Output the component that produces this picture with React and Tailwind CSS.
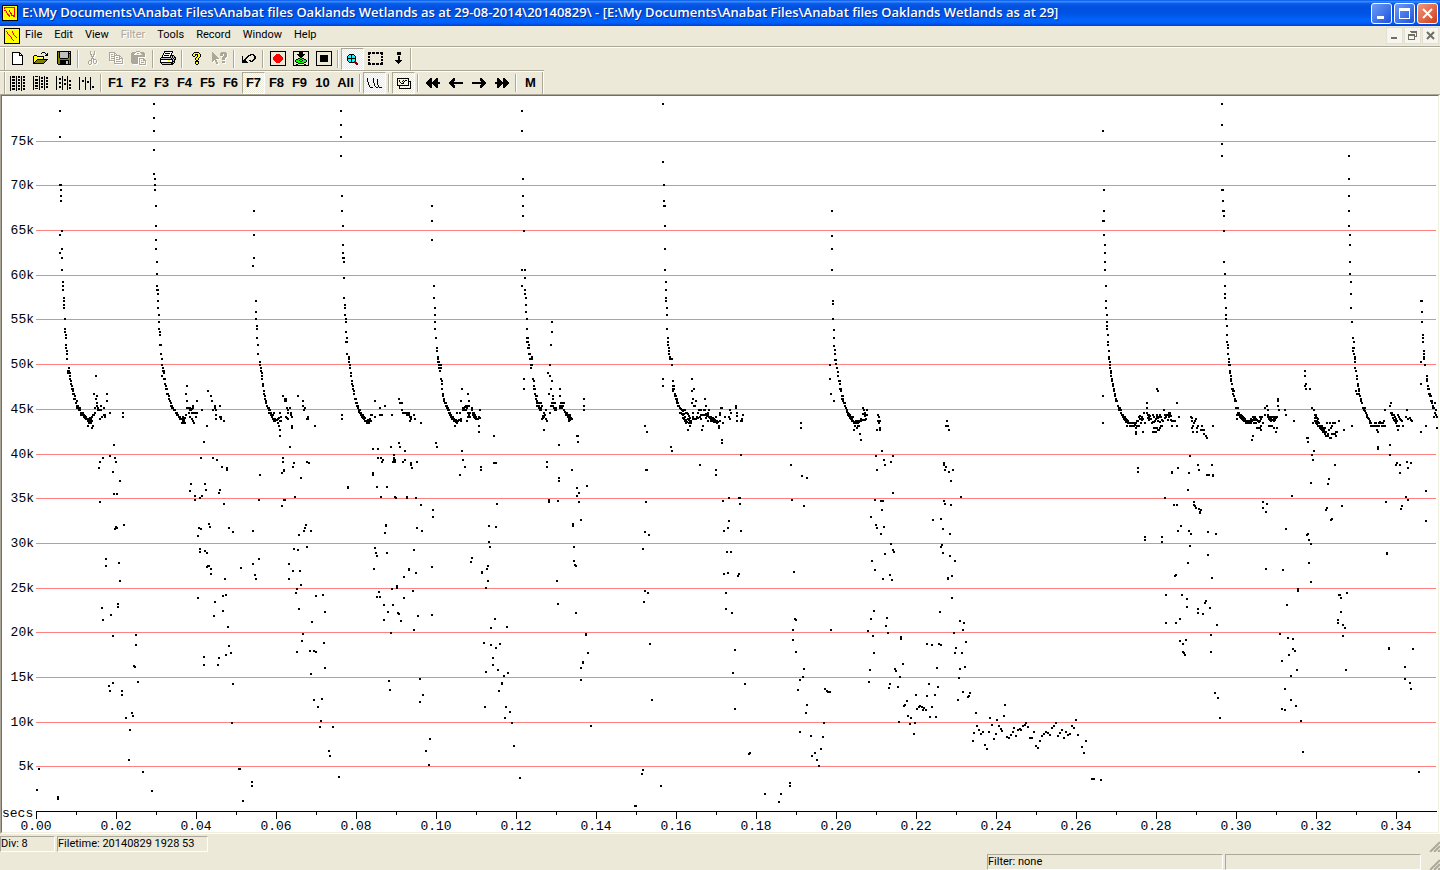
import { useState } from 'react';

const MENUS = ['File', 'Edit', 'View', 'Filter', 'Tools', 'Record', 'Window', 'Help'];

const TITLE =
  'E:\\My Documents\\Anabat Files\\Anabat files Oaklands Wetlands as at 29-08-2014\\20140829\\ - [E:\\My Documents\\Anabat Files\\Anabat files Oaklands Wetlands as at 29]';

// One letter per pixel in the toolbar bitmaps
const INKS = {
  K: '#000000',
  W: '#ffffff',
  G: '#c0c0c0',
  Y: '#ffff00',
  O: '#808000',
  R: '#ff0000',
  M: '#800000',
  C: '#00ffff',
  L: '#00ff00',
};

const BITMAPS = {
  new: [
    'KKKKKKKK...',
    'KWWWWWWKK..',
    'KWWWWWWKWK.',
    'KWWWWWWKKKK',
    'KWWWWWWWWWK',
    'KWWWWWWWWWK',
    'KWWWWWWWWWK',
    'KWWWWWWWWWK',
    'KWWWWWWWWWK',
    'KWWWWWWWWWK',
    'KWWWWWWWWWK',
    'KWWWWWWWWWK',
    'KKKKKKKKKKK',
  ],
  open: [
    '.........KKK....',
    '........K...K.K.',
    '.............KK.',
    '.KKK........KKK.',
    'KYWYKKKKKKK.....',
    'KWYWYWYWYWK.....',
    'KYWYWYWYWYK.....',
    'KWYWKKKKKKKKKKK.',
    'KYWKOOOOOOOOOK..',
    'KWKOOOOOOOOOK...',
    'KKOOOOOOOOOK....',
    'KKKKKKKKKKK.....',
  ],
  save: [
    'KKKKKKKKKKKKKK',
    'KOKGGGGGGGGKGK',
    'KOKGGGGGGGGKKK',
    'KOKGGGGGGGGKOK',
    'KOKGGGGGGGGKOK',
    'KOKGGGGGGGGKOK',
    'KOKGGGGGGGGKOK',
    'KOOKKKKKKKKOOK',
    'KOOOOOOOOOOOOK',
    'KOOKKKKKKKKKOK',
    'KOOKKKKKKGGKOK',
    'KOOKKKKKKGGKOK',
    'KOOKKKKKKGGKOK',
    '.KKKKKKKKKKKKK',
  ],
  cut: [
    '..K...K..',
    '..K...K..',
    '..K...K..',
    '..KK.KK..',
    '...K.K...',
    '...KKK...',
    '....K....',
    '...KKK...',
    '...K.KKK.',
    '.KKK.K..K',
    'K..K.K..K',
    'K..K.K..K',
    'K..K..KK.',
    '.KK......',
  ],
  copy: [
    'KKKKKK........',
    'K....KK.......',
    'K.KK.K.K......',
    'K....KKKKKK...',
    'K.KKKK....KK..',
    'K....K.KK.K.K.',
    'K.KKKK....KKKK',
    'K....K.KKKK..K',
    'KKKKKK.......K',
    '.....K.KKKKK.K',
    '.....K.......K',
    '.....KKKKKKKKK',
  ],
  paste: [
    '.....KKKK......',
    '.KKKK....KKKK..',
    'KKKK..KK..KKKK.',
    'KKK........KKK.',
    'KKKKKKKKKKKKKK.',
    'KKKKKKKKKKKKKK.',
    'KKKKKKK........',
    'KKKKKKK.KKKKK..',
    'KKKKKKK.K...KK.',
    'KKKKKKK.K.K.KKK',
    'KKKKKKK.K.....K',
    'KKKKKKK.K.KKK.K',
    '.KKKKKK.K.....K',
    '........KKKKKKK',
  ],
  print: [
    '....KKKKKKKKK...',
    '....KWWWWWWWK...',
    '...KWKKKKKWK....',
    '...KWWWWWWWK....',
    '..KWKKKKKWKKKK..',
    '..KWWWWWWWKGKGK.',
    '.KKKKKKKKKKGKGKK',
    'KGGGGGGGGGGKGKGK',
    'KKKKKKKKKKKKKGKK',
    'KWWWWWWWYYWWKGK.',
    'KWWWWWWWWWWWKKK.',
    'KKKKKKKKKKKKKGK.',
    '.KGGGGGGGGGKKK..',
    '..KKKKKKKKKKK...',
  ],
  help: [
    '..KKKKK..',
    '.KYYYYYK.',
    'KYYKKKYYK',
    'KYYK.KYYK',
    '.KK..KYYK',
    '....KYYK.',
    '...KYYK..',
    '...KYYK..',
    '....KK...',
    '...KKKK..',
    '...KYYK..',
    '...KYYK..',
    '....KK...',
  ],
  context: [
    'K........KKKKK..',
    'KK......KKKKKKK.',
    'KKK.....KKK.KKK.',
    'KKKK....KKK.KKK.',
    'KKKKK......KKKK.',
    'KKKKKK....KKKK..',
    'KKKKKKK...KKK...',
    'KKKK......KKK...',
    'KK.KK...........',
    'K..KK.....KKK...',
    '....KK....KKK...',
    '....KK..........',
  ],
  undo: [
    '........KKKK..',
    '......KKK..KK.',
    'K....KK.....KK',
    'K...KK......KK',
    'K..KK.......KK',
    'K.KK.......KK.',
    'KKKK...KK.KK..',
    'KKKKK...KKK...',
    'KKKKKK........',
  ],
  record: [
    'KKKKKKKKKKKKKKKK',
    'K..............K',
    'K..............K',
    'K.....RRRR.....K',
    'K....RRRRRR....K',
    'K...RRRRRRRR...K',
    'K..RRRRRRRRRR..K',
    'K..RRRRRRRRRR..K',
    'K..RRRRRRRRRR..K',
    'K...RRRRRRRR...K',
    'K....RRRRRR....K',
    'K.....RRRR.....K',
    'K..............K',
    'K..............K',
    'KKKKKKKKKKKKKKKK',
  ],
  monitor: [
    'KKKKKKKKKKKKKKKK',
    'K.....KKKK.....K',
    'K.....KKKK.....K',
    'K...KKKKKKKK...K',
    'K....KKKKKK....K',
    'K.....KKKK.....K',
    'K......KK......K',
    'K....KKLLKK....K',
    'K..KKLLKKLLKK..K',
    'K.KLLLKLLKLLLK.K',
    'K.KLLLLKKLLLLK.K',
    'K..KKLLLLLLKK..K',
    'K....KKKKKK....K',
    'K..KK......KK..K',
    'KKKKKKKKKKKKKKKK',
  ],
  stop: [
    'KKKKKKKKKKKKKKKK',
    'K..............K',
    'K..............K',
    'K..............K',
    'K...KKKKKKKK...K',
    'K...KKKKKKKK...K',
    'K...KKKKKKKK...K',
    'K...KKKKKKKK...K',
    'K...KKKKKKKK...K',
    'K...KKKKKKKK...K',
    'K...KKKKKKKK...K',
    'K..............K',
    'K..............K',
    'K..............K',
    'KKKKKKKKKKKKKKKK',
  ],
  zoom: [
    '..KKKKK....',
    '.KCCKCCK...',
    'KCCCKCCCK..',
    'KCCCKCCCK..',
    'KKKKKKKKK..',
    'KCCCKCCCK..',
    'KCCCKCCCK..',
    '.KCCKCCMM..',
    '..KKKKKMMM.',
    '........MMM',
    '.........MM',
  ],
  select: [
    'KKK.KKK.KKK.KKK',
    'KKK.KKK.KKK.KKK',
    'KK...........KK',
    '...............',
    'KK...........KK',
    'KK...........KK',
    '...............',
    'KK...........KK',
    'KK...........KK',
    '...............',
    'KK...........KK',
    'KKK.KKK.KKK.KKK',
    'KKK.KKK.KKK.KKK',
  ],
  drop: [
    '..KKKK.',
    '..KKKK.',
    '..KKKK.',
    '.......',
    '...KK..',
    '...KK..',
    '...KK..',
    '...KK..',
    'KKKKKKK',
    '.KKKKK.',
    '..KKK..',
    '...K...',
  ],
  bars1: [
    'K.KKK.K.KK.K.KK.',
    'K.KKK.K.KK.K.KK.',
    'K.....K....K....',
    'K.KKK.K.KK.K.KK.',
    'K.KKK.K.KK.K.KK.',
    'K.....K....K....',
    'K.KKK.K.KK.K.KK.',
    'K.KKK.K.KK.K.KK.',
    'K.....K....K....',
    'K.KKK.K.KK.K.KK.',
    'K.KKK.K.KK.K.KK.',
    'K.....K....K....',
    'K.KKK.K.KK.K.KK.',
    'K.KKK.K.KK.K.KK.',
    'K.....K....K....',
  ],
  bars2: [
    'K.KKK.K....K....',
    'K.....K.KK.K.KK.',
    'K.....K.KK.K.KK.',
    'K.KKK.K....K....',
    'K.KKK.K.KK.K.KK.',
    'K.....K.KK.K.KK.',
    'K.KKK.K....K....',
    'K.KKK.K.KK.K.KK.',
    'K.....K.KK.K.KK.',
    'K.KKK.K....K....',
    'K.KKK.K.KK.K.KK.',
    'K.....K.KK.K.KK.',
    'K.KKK.K....K....',
    'K.....K....K....',
  ],
  bars3: [
    'K.....K....K....',
    'K.....K....K....',
    'K..KK.K....K....',
    'K..KK.K.KK.K....',
    'K.....K.KK.K.KK.',
    'K.....K....K.KK.',
    'K..KK.K....K....',
    'K..KK.K.KK.K....',
    'K.....K.KK.K.KK.',
    'K.....K....K.KK.',
    'K..KK.K....K....',
    'K..KK.K....K.KK.',
    'K.....K....K.KK.',
    'K.....K....K....',
  ],
  bars4: [
    'K.....K....K....',
    'K.....K....K....',
    'K.....K....K....',
    'K..KK.K....K....',
    'K..KK.K.KK.K....',
    'K.....K.KK.K....',
    'K.....K....K....',
    'K.....K....K....',
    'K.....K....K....',
    'K.....K....K.KK.',
    'K.....K....K.KK.',
    'K.....K....K....',
    'K.....K....K....',
  ],
  calls: [
    'K.....K........',
    'K.....K...K....',
    'K.....K...K....',
    'K.....K...K....',
    '.K....K...K....',
    '.K.....K..K....',
    '.K.....K..K....',
    '..K....K...K...',
    '..K.....K..K...',
    '...KKK...KK.KKK',
  ],
  windows: [
    'KKKKKKKKKKKK..',
    'K..........K..',
    'K.K...K.KK.K..',
    'K.K..K.K...KKK',
    'K..K..K....K.K',
    'K...KKK....K.K',
    'K..........K.K',
    'KKKKKKKKKKKK.K',
    '..K..........K',
    '..K..........K',
    '..KKKKKKKKKKKK',
  ],
  first: [
    '....KK....KK..',
    '...KKK...KKK..',
    '..KKKK..KKKK..',
    '.KKKKK.KKKKK..',
    'KKKKKKKKKKKKKK',
    'KKKKKKKKKKKKKK',
    '.KKKKK.KKKKK..',
    '..KKKK..KKKK..',
    '...KKK...KKK..',
    '....KK....KK..',
  ],
  prev: [
    '....KK........',
    '...KKK........',
    '..KKKK........',
    '.KKKK.........',
    'KKKKKKKKKKKKKK',
    'KKKKKKKKKKKKKK',
    '.KKKK.........',
    '..KKKK........',
    '...KKK........',
    '....KK........',
  ],
  logo: [
    'KKKKKKKKKKKKKKKK',
    'KYYYYYYYYYYYYYYK',
    'KYRRRRRRRRRRRYYK',
    'KYRYYYYYYYYYRYYK',
    'KYYYYYYYYYYYRYYK',
    'KYRRYYYRYYYYRYYK',
    'KYYYRYYRYYYYRYYK',
    'KYYYRYYYRYYYRYYK',
    'KYYYYRYYRRYYRYYK',
    'KYYYYRRYYRYYRYYK',
    'KYYYYYRRYRRRRYYK',
    'KYYYYYYRYYYRRYYK',
    'KYYYYYYYYYYYYYYK',
    'KYYYYYYYYYYYYYYK',
    'KYYYYYYYYYYYYYYK',
    'KKKKKKKKKKKKKKKK',
  ],
  child: [
    'KKKKKKKKKKKKKKKK',
    'KYYYYYYYYYYYYYYK',
    'KYYYYYYYYYYYYYYK',
    'KYRYYYYYRYYYYYYK',
    'KYYRYYYYRYYYYYYK',
    'KYYRYYYYYRYYYYYK',
    'KYYYRYYYYRYYYYYK',
    'KYYYYRYYYYRYYYYK',
    'KYYYYYRYYYYRYYYK',
    'KYYYYYYRYYYYRYYK',
    'KYYYYYYRYYYYYYYK',
    'KYYYYYYYRYYYYYYK',
    'KYYYYYYYYRYYYYYK',
    'KYYYYYYYYYYYYYYK',
    'KYYYYYYYYYYYYYYK',
    'KKKKKKKKKKKKKKKK',
  ],
};

const mirror = (rows) => rows.map((r) => r.split('').reverse().join(''));
BITMAPS.next = mirror(BITMAPS.prev);
BITMAPS.last = mirror(BITMAPS.first);

const FILE_BAR = [
  ['new', 'New'], ['open', 'Open'], ['save', 'Save'], null,
  ['cut', 'Cut', 'off'], ['copy', 'Copy', 'off'], ['paste', 'Paste', 'off'], null,
  ['print', 'Print'], null,
  ['help', 'Help'], ['context', 'Context help', 'off'], null,
  ['undo', 'Undo'], null,
  ['record', 'Record'], ['monitor', 'Monitor'], ['stop', 'Stop'], null,
  ['zoom', 'Zoom', 'down'], ['select', 'Select'], ['drop', 'Drop marker'],
];

const SCALES = ['F1', 'F2', 'F3', 'F4', 'F5', 'F6', 'F7', 'F8', 'F9', '10', 'All'];

// Frequency lines, top to bottom
const FREQS = [
  [75, 141], [70, 185], [65, 230], [60, 275], [55, 319], [50, 364], [45, 409], [40, 454],
  [35, 498], [30, 543], [25, 588], [20, 632], [15, 677], [10, 722], [5, 766],
];

// Zero-crossing dots. Each block has its own origin, three units to a pixel,
// and lists its columns as x:y,y,y
const BLOCKS = [
  {
    x: 0,
    y: 96,
    dots: `180:45,123,267,417,471 183:267,282,300,315 186:405,459,486,522 189:558,570,582 192:606,615,627,636
      195:669,699,708 198:717,726,747,756 201:765,774,789 204:825,831 207:816,825,831 210:831,840,849 213:855,864
      216:870,879 219:879,885,894 222:894,909 225:900,909 228:921 231:915,930,936 234:930,936 237:936,942 240:936,942
      243:951,957 246:951,957 249:951,957 252:957,963 255:960,966 258:963,969 261:969 264:969,975,990 267:969,975,981
      270:966,975,981 273:969,975,981 276:963,975,996 279:957,990 282:894,957 285:936,951 288:840,909 291:900,921,930
      294:936,942 297:942 300:942,969,1098 303:930,942 306:963 312:936,957 315:957,963 321:894,915 330:951,1080
      369:951,963 342:1047 309:1086 345:1086 348:1098 297:1116 339:1128
      462:24,66,105,162,234 465:249,267,282 468:330,390,432,459 471:498,534,570,582 474:582,594,615,636
      477:657,678,699 480:708,717,747 483:747,774 486:789,807,840 489:816,825 492:825,831,849 495:849,864 498:870,879
      501:879,894 504:894 507:900,909 510:915 513:921,930 516:930,936 519:936 522:942 525:942 528:951 531:951,957
      534:957 537:963 540:963,969 543:969 546:969,981 549:963,969,975,981 552:969,975 555:966,981 558:894,957
      561:870,915,936 564:936 567:936,951 570:936,942,963 573:942 576:939,951,969 579:930,936,951,975 582:981
      585:951 588:951,963 591:915,951 606:942 624:885 633:900 636:915 639:942,1086 645:930,936 648:942,957,969
      660:930,963 663:963,969 672:975 621:990 612:1038 603:1086 651:1092 666:1113 681:1116,1122
      762:345,417,486 759:510 768:615,648,669 771:690,699,726 774:747,774 780:798,807,1137 783:816,825
      786:831,840,849 789:864,870 792:885,894 795:900,909 798:915,921 801:930 804:936 807:936,942,951 810:942,951
      813:951,957 816:957,963 819:957,969 822:951,969,975 825:969,975 828:972 831:972 834:969,981 837:966,990
      840:951,975,1002,1020 843:963,975 849:900,1086,1098 855:909,915 858:909,915,963 861:936,966 864:942,951,969
      870:936,1053 873:951,957 876:963,990,996 894:900 909:915,930 912:942 915:936 921:969,1098 924:963,969 945:990
      882:1101 879:1113 852:1122 846:1131 927:1101
      1023:45,87,123,180 1026:300,345,957,969 1029:390,447,471,486 1032:486,498,546,606 1035:627,636,657
      1038:669,678,708,738 1041:726,738,774 1047:783,789,798 1050:807,816 1053:831,840 1056:855,864 1059:870,879
      1062:885,894 1065:909 1068:909,921 1071:921,930 1074:930,936 1077:942,948`,
  },
  {
    x: 360,
    y: 96,
    dots: `0:942,951 3:951,957 6:957,963 9:957,966 12:963,969 15:966,975 18:975 21:975,981 24:972,981 27:975,981
      30:969 33:957,975 36:957 45:915,963 60:936,957 66:957,1098 75:930 96:957 117:909,1041 120:921,1053 126:921,942
      129:951,1098 135:951,1065,1092 141:951,957 147:951,957 150:963,975 153:963,969,1101,1107 162:957 165:969 183:981
      93:1053 39:1059,1131,1137 54:1059,1086 63:1086 69:1092 102:1077,1086,1092,1098 99:1098 105:1092,1098 156:1116
      171:1098 228:1041 231:1053
      216:330,375,432 222:570,606 225:636,657,678,699 228:726 231:756,765 234:783,789,798 237:798,807,816
      240:807,816,825 243:807,816,849 246:855,864,879 249:894,900 252:909,915 255:921 258:921,930 261:930,936
      264:936,942 267:942,951 270:951,957 273:957,963 276:963,969 279:963,969 282:969,975 285:975,990 288:972,978
      291:951,975,981 294:975 297:972 300:951,972,1137 303:915,969,975 306:879,1065 309:936,942,1092 312:936,942
      315:933,942,1113 318:930,942 321:930,936,975 324:894,930,951,963 327:915,930,957 330:951,963 336:936,942
      339:951,957 342:951,963 345:957,966 348:963,969 351:969 354:969 357:963,990,1008 360:942,966 402:1020,1101
      363:1113,1122 408:1101
      486:45,105,522,570 489:249,300,330,360 492:405,849,879 495:522,546,582,594 498:606,627,648 501:669,699,726,738
      504:726,738,756 507:747,756,774 510:774,789 513:789,807,816 516:783,789,807 519:849 522:855,870,879 525:879,894
      528:900,909 531:900,915,921,930 534:921,930 537:921,930,936 540:936,942 543:921,936,942 546:930,969 549:960,966
      552:951,963,1002 555:957 558:942,969 561:975,1098,1113 576:678,708,855,921 573:747,879,930 570:807,840,951
      564:831 567:894 579:900,909,930 582:921,936 585:921,936,942 588:936,942 600:879,900,930,936 603:921,936
      606:921,930,936 609:921,930 612:921,942 615:948 618:951,957 621:951,957 624:957,963 627:957,969,975
      630:957,963,972 633:966 636:969,1122 672:909,930,942 651:1020 654:1020,1038 597:1047
      909:24,198,849 912:267,315,330 915:330,390,459,522 918:558,582,606,615 921:636,657,699 924:726,738,747
      927:756,765,774 930:783,789 933:789 936:789,807 996:849`,
  },
  {
    x: 720,
    y: 96,
    dots: `336:345,420,459,522 339:615,624,669 342:702,726,750 345:762,774,792 348:792,804 351:816 354:828,840
      330:807,849`,
  },
  {
    x: 640,
    y: 380,
    dots: `69:18 99:3,18,27,33 102:18,27 105:42,48 108:48,57 111:57,63,69 114:69,78 117:78 120:84,99 123:87,99
      126:90,102 129:93,105,114 132:90,102,117 135:90,111,123 138:99,120,129 141:99,126 144:102,117,150 147:108,120,129
      150:114,126,138 153:123,129 156:33,69 162:27,78,117 159:57,99,111,117 165:78 168:63,117 171:111 174:99,114
      177:90 180:90,111,255 183:90,105,117 186:105,150 189:105,138 192:90,105 195:57,90,105 198:78,102,114 201:102,108
      204:99,105,123 207:90,111 210:114 213:111,117,123 216:117,123 219:114,123 222:117,126 225:120,126 228:111,126,270,285
      231:123,129 234:126 237:138,144 240:99,105,123 243:84 246:84,180,189 249:129,363 255:111 267:111,354,423
      270:90,117 273:99,516 288:78,84 291:99,108,123 303:123,225,453 306:117,123 309:105
      93:201 96:213 18:270,366 21:156,270 15:138,456,633 297:354,582 300:354,372 264:444,579 252:453,582 261:516
      294:588 258:639,687 276:699 285:810,987 279:879 315:912 327:1122 330:1119 27:465 9:507,1170 24:639 12:666
      30:792 36:960 6:1182
      483:129,144 453:255 486:288 501:294,975 456:360 492:378,867 462:576 465:717 468:720,816 459:750,780 573:42,750
      489:891 480:900,1056 474:930 498:999 552:1029 513:1068 549:1071 543:1107 525:1119 516:1128 531:1140 537:1158
      555:927 561:933 564:936 570:936
      582:63 597:3 600:3,12,27 603:27,33 606:48,57 609:48,57,63 612:69 615:69,78 618:84 621:90,96 624:99,105
      627:102,108 630:105,114 633:111,117 636:117,123 639:111,123 642:126,129,150 645:126,138 648:123,129
      651:126,129,144 654:123,129,138 657:126,138 660:123,162 663:117,123,180 666:120 669:84,102,120 672:90,102
      675:99,108,120 678:105,117 681:90,105
      714:105,123 717:111,123,129 720:123,144,150 711:150,270,444 726:213,363,390 708:228,435 759:228,339,510
      732:240,441 753:246,492 735:255,522 705:360,570 723:363,462 729:363,597 693:411,717 762:516 696:543 750:585,912
      756:600 702:693,819 741:714 738:738 684:753 744:759 699:768 783:771,777 789:852 690:870 765:867 768:873
      780:891 687:906 747:924 774:921 828:945 861:792,948 885:945 867:912 894:921 891:864 876:795,981 897:792
      903:795 801:963 795:975 792:978 831:987 837:981 840:978 846:981 849:990 852:984 858:990 870:1011 888:1011
      804:1008 813:1014 777:1026 810:1032 825:1029 822:1062
      921:123,138 918:138,261 924:138,594,597 927:150,276 912:249,255,363 915:270,372 939:270 933:303,375 963:351
      903:417,501 879:420 909:447,519 930:462,528 906:495 945:543,819 936:588,654 900:696 960:723,867 972:729
      969:750,936 942:759 978:786 948:804 966:819 975:861 957:894 990:939 987:948 984:951 954:960 1008:999 1095:975
      1092:1008 1050:1014 1071:1020 1011:1038 1056:1035 1077:1038 1083:1047 1086:1053 1017:1050 1029:1056 1023:1062
      1002:1059 1047:1056 1068:1062 1062:1077 999:1083 1035:1095 1041:1107 1101:1071 1107:1074 1113:1065 1119:1056
      1122:1044 1128:1068 1134:1050 1140:1047 1143:1050 1149:1038 1155:1035 1158:1029 1164:1041 1170:1074 1176:1074
      1182:1056 1188:1098 1194:1104 1200:1083 1206:1068 1212:1062 1218:1056 1224:1059 1230:1065 1236:1044 1242:1038
      1248:1029 1254:1068 1260:1059 1266:1050 1272:1074 1278:1056 1284:1065 1290:1062 1296:1038 1302:1044 1308:1020
      1314:1065`,
  },
  {
    x: 720,
    y: 770,
    dots: '135:72 177:96 183:72 210:39,48',
  },
  {
    x: 360,
    y: 470,
    dots: `597:24,33 681:48 651:54,78 657:69,96 51:51,258,381 81:51,249 63:81 105:81 108:84 141:81,84 168:84,309
      183:105 411:102 567:90,96 594:93,402 219:120,141 78:165,168 75:189 387:168,216 408:171,534 171:174 186:183
      639:162,168 663:150,594,630 390:231 642:231,273 45:234 48:249 162:240,480 336:264 333:276 645:285 648:288,429
      384:288,333 381:297 42:297 147:297,300 216:291,435 366:306,309 132:321,384 591:333 111:348,354 96:357
      378:354,606 57:366 60:381 159:363 72:405,450 99:405 84:426 114:429 117:432 123:453 174:438 405:447 393:474,525
      441:471 93:489 678:492,495 372:519 420:522 684:549 399:564,585 669:576,579 414:600 444:609 432:618 180:627,696
      87:633 426:639,642 90:660 417:663 189:675 375:711 438:711 450:726 435:744 456:759 693:768 210:807 462:828
      198:843 207:885 480:924 846:912 849:900 825:1008 828:1008 903:948`,
  },
  {
    x: 0,
    y: 470,
    dots: `339:6,498,639 360:33,333 342:72 351:72,174 300:96 372:165 348:171 345:177 318:267,288 357:279 354:402,411
      306:414 333:435 309:450 408:495,525 402:588 405:591 414:636 327:648 330:663 366:663,675 396:729 399:738 378:744
      390:780 387:870 429:906 456:963 117:897 111:960 174:981,987
      573:42 615:42,243 570:63 618:60 660:60 657:69,564 585:78,90 606:78 600:84,237,246 672:102 627:162,288 630:171
      597:174 603:177 594:198,384 687:174,528 699:186,642 621:249,291 633:297,312 675:327 723:294 669:378,423
      678:375,555 645:396 642:438 684:471 693:549 612:561,585 654:585 696:759 717:897 720:897 756:936,948 729:993
      624:288
      780:15 846:9,108 852:3,90 903:24,345 885:81 777:90,267 855:90 759:183,282 918:165 915:174 912:183 933:183,612
      897:195,417 921:231 882:237 894:240 867:282,327 765:315 768:327 879:303 900:303 891:357,546 888:369
      948:378,546 969:375 975:426,594 936:456 909:492 906:513 972:519 930:543 942:543,690 966:687 954:711 963:753
      960:771 999:771 987:843 990:858 1017:921 1044:51,54`,
  },
  {
    x: 1080,
    y: 96,
    dots: `69:105,375,900,981 72:282,345,375,417 75:447,471,498,522 78:570,615,636 81:657,678,690,699 84:717,738,747
      87:765,783,789 90:798,807,816 93:825,831,840 96:849,855 99:864,870 102:879,885 105:894,900 108:909,915 111:915
      114:930 117:936,942 120:936,942 123:942,951 126:957 129:957,963 132:963,969 135:963,972 138:969,978
      141:972,990 144:975,981 147:981 150:981,990 153:990 156:981 159:990 162:981,990 165:987 168:981,996,1008,1014
      171:975,990 174:975,1116,1128 177:963,990 180:960,969 183:969,981 186:963,972 189:969,1008 192:951 195:981
      201:921,936,951 204:957,966 207:957,963,972 210:960,969 213:969 216:981 219:957,978,1008 222:963,978,996
      225:975,1008 228:969,996,1008 231:879,957,963,996 234:885,966,975,1002 237:963,1002 240:957,978,996
      243:963,990 246:972,990 249:975 252:942 255:957,966 258:957,963 261:957 264:957,972 267:951,963 270:951,957
      273:960,972 276:975,990,1128,1131 279:975 285:975 291:921,990 297:963 333:963 336:966,975,996 339:990,1008
      342:981 345:975 348:969 354:990,1107 351:996,1008 363:1002 366:990 369:1002 372:1002,1014 378:1020 381:1026,1137
      399:990,1137 330:1080 396:1107 294:1116 327:1131 357:1122 387:1137
      426:24,87,144,180,282 429:282,315,345 432:345,360,405,498 435:534,570,594,606 438:636,657,669 441:690,717,738
      444:747,756,774 447:789,798,807 450:807,825,831 453:840,849,855 456:864,879 459:879,885,894 462:885,900
      465:909,915 468:915,936 471:936,957,969 474:936,951 477:951,957 480:957,963 483:957,966 486:960,969
      489:963,972 492:966,975 495:969,975 498:975,981 501:975,981 504:975 507:975,981 510:975 513:969,981
      516:975,1032 519:963,972,1020 522:963,969,981 525:963,972 528:969,981 531:972,996 534:975,996 537:978,996
      540:963,975,996 543:963,969,990,1002 546:963 549:981 555:936,957 561:930 564:942,957,963 567:969,990
      570:963,972,990 573:966,975 576:963,972,990 579:963,972 582:969,975,996 585:963,972 588:966,1008 591:963,996
      594:909,915,930 597:942 615:942 618:957 642:975
      675:825,840,870 678:864,879 690:879 696:936,1077 702:942,1065 699:981,1092 705:957,966,975 708:957,963,981
      711:966,975,984 714:969,978,990 717:981,990 720:990,996 723:993,999 726:990,1002 729:996,1008 732:1002,1008
      735:996,1014 738:1008,1020 741:981,1020 744:1014,1020 747:1002 750:981,1026 753:996,1026 756:990,1014 759:981
      762:1014 765:981,1014,1107 768:1008,1020 771:1008 777:975 792:1002 684:1026,1038 681:1026
      807:180,249,300,345,390 810:417,447,498,534 813:558,594,636 816:678,990 819:726,756,765 822:738,756,774
      825:783,789,798,816 828:825,885 831:840,849,894 834:864,870,894 837:879,885,894 840:900 843:909,915 846:921
      849:936 852:936,942 855:936,945 858:951 861:957,963 864:966 867:969 870:975,981 873:981,990 876:990 879:990
      882:990 885:981,990 888:981,990 891:990,1002 894:990,1008,1053,1059 897:981,990 900:978 903:981 906:990
      909:981 912:975,990 915:942,990 930:930,1047,1077 933:921,951 936:951,957 939:957,966 942:957,972 945:963,975
      948:969,981,1107 951:975,990,1101 954:957,1002 957:963,990 960:969,1107,1131 963:972 966:975 969:990 978:963
      981:942,1098 984:969,1116 990:966 993:972,1101 996:975
      1023:615,798,864,1008 1026:615,648,678 1029:717,726,738 1032:765,774,783,789 1035:807 1041:840,849,855
      1044:870,879 1047:879,894 1050:894,900 1053:900,915 1056:915,921 1059:930,936 1062:936,963 1065:921,951
      1068:942,957 1071:963,996 1038:990`,
  },
  {
    x: 1080,
    y: 470,
    dots: `276:6,9 327:9,183 381:15 387:15 399:18 324:60,279 255:84 282:105 291:105 342:96,105 345:108 348:114
      357:117 363:120 360:126,129 303:168 294:183 333:192 384:186,255 408:192 195:201,210 246:201,216 330:228
      288:315,459 285:318 396:324 258:375,459 306:375 321:387,411 378:393 375:399 354:417,429 390:414 369:432
      300:447,513 411:465 393:495,546 318:510 309:522,546 312:549 315:555 405:669 414:684 420:744 18:813 6:831 12:849
      36:927 39:927 42:927 63:930
      693:39,222,336 747:27 744:42 636:78 549:96,114 561:102 558:126,297 741:114 738:120 786:108 756:147 753:150
      618:177 684:192 681:195 687:210,279 609:300 654:357,363 621:405 777:375 780:375 801:369 783:384,426
      774:450,459 789:465,498 795:474 600:492 624:504 639:507,537 645:543 627:555 606:573,717 651:600 633:618,690
      798:600 615:657,720 648:708 663:753 669:846
      960:9 1038:63,153 978:81 984:90 918:96 966:108 963:117 921:249,252 927:534,537 999:537 975:591,627 990:639
      993:657 1017:906`,
  },
];

const DOT_PATH = BLOCKS.map((block) =>
  block.dots
    .split(/\s+/)
    .map((col) => {
      const [x, ys] = col.split(':');
      const px = block.x + Math.round(x / 3) - 1;
      return ys
        .split(',')
        .map((y) => `M${px} ${block.y + Math.round(y / 3) - 1}h2v2h-2z`)
        .join('');
    })
    .join('')
).join('');

function Bitmap({ name, off }) {
  const rows = BITMAPS[name];
  const w = rows[0].length;
  const h = rows.length;
  const paths = {};
  rows.forEach((row, y) => {
    row.split('').forEach((c, x) => {
      if (c !== '.') paths[c] = `${paths[c] || ''}M${x} ${y}h1v1h-1z`;
    });
  });

  return (
    <svg width={w} height={h} viewBox={`0 0 ${w} ${h}`} shapeRendering="crispEdges" className="overflow-visible shrink-0" aria-hidden="true">
      {off && <path d={paths.K} fill="#ffffff" transform="translate(1 1)" />}
      {Object.entries(paths).map(([c, d]) => (
        <path key={c} d={d} fill={off ? '#aca899' : INKS[c]} />
      ))}
    </svg>
  );
}

function ToolButton({ label, off, down, onClick, children }) {
  return (
    <button
      type="button"
      aria-label={label}
      aria-pressed={down ? true : undefined}
      disabled={off}
      onClick={onClick}
      className={
        down
          ? 'flex h-[22px] w-[23px] items-center justify-center border border-t-[#aca899] border-l-[#aca899] border-r-white border-b-white bg-[repeating-conic-gradient(#ffffff_0_25%,#ece9d8_0_50%)] bg-[length:2px_2px]'
          : 'flex h-5 w-[23px] items-center justify-center'
      }
    >
      {children}
    </button>
  );
}

function Edge() {
  return <div className="h-[22px] w-[2px] border-l border-[#aca899] bg-white" />;
}

function Divider() {
  return (
    <div className="flex w-[6px] justify-center self-center">
      <div className="h-[18px] w-[2px] border-l border-[#aca899] bg-white" />
    </div>
  );
}

function TitleBar() {
  const base = 'flex h-[21px] w-[21px] items-center justify-center rounded-[3px] border border-white';
  return (
    <header className="flex h-[26px] items-center bg-[linear-gradient(180deg,#0058e6_0%,#3a8bff_6%,#0a5ae8_14%,#0050e0_30%,#0054e6_55%,#0064fc_78%,#0060f8_88%,#003dd0_100%)] px-[2px]">
      <Bitmap name="logo" />
      <h1 className="ml-1 flex-1 truncate font-['Open_Sans',sans-serif] text-[13px] font-semibold text-white [text-shadow:1px_1px_0_#0a2a8a]">
        {TITLE}
      </h1>
      <div className="flex gap-[2px]">
        <button type="button" aria-label="Minimize" className={`${base} bg-linear-to-br from-[#6f9cf5] to-[#1e50dc]`}>
          <svg width="13" height="13" aria-hidden="true"><path d="M2 9h7v3H2z" fill="#fff" /></svg>
        </button>
        <button type="button" aria-label="Maximize" className={`${base} bg-linear-to-br from-[#6f9cf5] to-[#1e50dc]`}>
          <svg width="13" height="13" aria-hidden="true"><path d="M1 1h11v11H1zM2 4v7h9V4z" fill="#fff" fillRule="evenodd" /></svg>
        </button>
        <button type="button" aria-label="Close" className={`${base} bg-linear-to-br from-[#f0967c] to-[#cc3a12]`}>
          <svg width="13" height="13" aria-hidden="true"><path d="M2 2l9 9M11 2l-9 9" stroke="#fff" strokeWidth="2" /></svg>
        </button>
      </div>
    </header>
  );
}

function MenuBar() {
  const child = 'flex h-[17px] w-[17px] items-center justify-center border border-[#e3e0d0] bg-[#f6f5ef]';
  return (
    <div className="flex h-5 items-center pl-1 pr-px">
      <Bitmap name="child" />
      <nav className="ml-[5px] flex gap-3 pb-[2px]">
        {MENUS.map((m) => (
          <button
            key={m}
            type="button"
            disabled={m === 'Filter'}
            className={m === 'Filter' ? 'text-[#aca899] [text-shadow:1px_1px_0_#ffffff]' : 'text-black'}
          >
            {m}
          </button>
        ))}
      </nav>
      <div className="ml-auto flex gap-px pb-px">
        <button type="button" aria-label="Minimize document" className={child}>
          <svg width="9" height="9" aria-hidden="true"><path d="M1 6h6v2H1z" fill="#716f64" /></svg>
        </button>
        <button type="button" aria-label="Restore document" className={child}>
          <svg width="9" height="9" aria-hidden="true" shapeRendering="crispEdges">
            <path d="M2 0h7v6H7V5h1V2H3V1H2zM0 3h7v6H0zM1 5v3h5V5z" fill="#716f64" fillRule="evenodd" />
          </svg>
        </button>
        <button type="button" aria-label="Close document" className={child}>
          <svg width="9" height="9" aria-hidden="true"><path d="M1 1l7 7M8 1l-7 7" stroke="#716f64" strokeWidth="2" /></svg>
        </button>
      </div>
    </div>
  );
}

function Plot() {
  const ticks = Array.from({ length: 35 }, (_, i) => 36 + i * 40);
  return (
    <main className="border border-t-[#716f64] border-b-[#f1efe2] border-l-[#716f64] border-r-[#f1efe2] bg-white">
      <svg viewBox="2 96 1436 736" className="block h-auto w-full overflow-visible" role="img" aria-label="Frequency against time">
        <g shapeRendering="crispEdges">
          {FREQS.map(([k, y]) => (
            <path key={k} d={`M36 ${y}h1400v1H36z`} fill="#ff8080" />
          ))}
          <path d="M36 811h1401v1H36z" />
          {ticks.map((x, i) => (
            <path key={x} d={i % 2 ? `M${x} 811h1v4h-1z` : `M${x} 811h1v8h-1z`} />
          ))}
          <path d={DOT_PATH} />
        </g>
        <g className="font-['Liberation_Mono',monospace] text-[13px]">
          {FREQS.map(([k, y]) => (
            <text key={k} x="34" y={y + 4} textAnchor="end">{k}k</text>
          ))}
          <text x="2" y="817">secs</text>
          {ticks.filter((_, i) => i % 2 === 0).map((x, i) => (
            <text key={x} x={x} y="830" textAnchor="middle">{(i * 0.02).toFixed(2)}</text>
          ))}
        </g>
      </svg>
    </main>
  );
}

function Grip() {
  return (
    <svg width="12" height="12" aria-hidden="true">
      <path d="M1 12L12 1M5 12l7-7M9 12l3-3" stroke="#ffffff" strokeWidth="1" />
      <path d="M2 12L12 2M6 12l6-6M10 12l2-2" stroke="#aca899" strokeWidth="2" />
    </svg>
  );
}

function StatusBars() {
  const pane = 'h-4 truncate border border-t-[#aca899] border-l-[#aca899] border-r-white border-b-white leading-[14px]';
  return (
    <footer>
      <div className="flex h-[18px] items-end">
        <div className={`${pane} w-[55px]`}>Div: 8</div>
        <div className={`${pane} ml-[2px] w-[151px]`}>Filetime: 20140829 1928 53</div>
        <div className="ml-auto"><Grip /></div>
      </div>
      <div className="flex h-[18px] items-end justify-end">
        <div className={`${pane} w-[236px]`}>Filter: none</div>
        <div className={`${pane} ml-[2px] mr-[7px] w-[196px]`} />
        <Grip />
      </div>
    </footer>
  );
}

export default function App() {
  const [scale, setScale] = useState('F7');

  return (
    <div className="w-full bg-[#ece9d8] font-['Roboto',sans-serif] text-[11px] text-black">
      <TitleBar />
      <MenuBar />
      <div className="border-t border-[#aca899]">
        <div className="border-t border-white">
          <div role="toolbar" aria-label="Standard" className="flex w-[544px] items-start border-b border-[#aca899] pl-[4px] shadow-[0_1px_0_#ffffff]">
            <Edge />
            {FILE_BAR.map((item, i) =>
              item ? (
                <ToolButton key={item[0]} label={item[1]} off={item[2] === 'off'} down={item[2] === 'down'}>
                  <Bitmap name={item[0]} off={item[2] === 'off'} />
                </ToolButton>
              ) : (
                <Divider key={i} />
              )
            )}
            <Edge />
          </div>
        </div>
        <div className="mt-px border-b border-[#aca899]">
          <div role="toolbar" aria-label="Scale" className="flex w-fit items-center pl-[4px]">
            <Edge />
            {['bars1', 'bars2', 'bars3', 'bars4'].map((b, i) => (
              <ToolButton key={b} label={`Compression ${i + 1}`}>
                <Bitmap name={b} />
              </ToolButton>
            ))}
            <Divider />
            {SCALES.map((s) => (
              <ToolButton key={s} label={s} down={s === scale} onClick={() => setScale(s)}>
                <span className="font-['Liberation_Sans',sans-serif] text-[13px] font-bold leading-4">{s}</span>
              </ToolButton>
            ))}
            <Divider />
            <ToolButton label="Calls" down><Bitmap name="calls" /></ToolButton>
            <Divider />
            <ToolButton label="Overlay" down><Bitmap name="windows" /></ToolButton>
            <Divider />
            <ToolButton label="First file"><Bitmap name="first" /></ToolButton>
            <ToolButton label="Previous file"><Bitmap name="prev" /></ToolButton>
            <ToolButton label="Next file"><Bitmap name="next" /></ToolButton>
            <ToolButton label="Last file"><Bitmap name="last" /></ToolButton>
            <Divider />
            <ToolButton label="Mark">
              <span className="font-['Liberation_Sans',sans-serif] text-[13px] font-bold leading-4">M</span>
            </ToolButton>
            <Edge />
          </div>
        </div>
      </div>
      <div className="border-l border-r border-b border-l-[#aca899] border-r-white border-b-white">
        <Plot />
      </div>
      <StatusBars />
    </div>
  );
}
